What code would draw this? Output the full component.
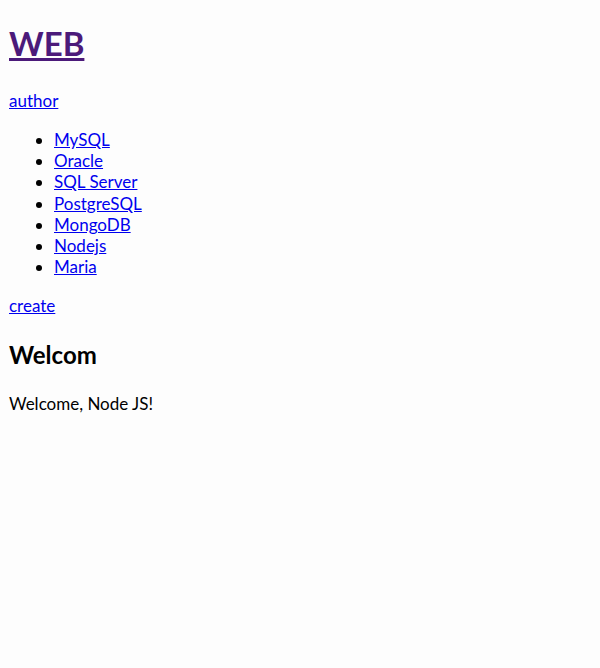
const items = ['MySQL', 'Oracle', 'SQL Server', 'PostgreSQL', 'MongoDB', 'Nodejs', 'Maria']

export default function App() {
  return (
    <div className="min-h-screen bg-[#fdfdfd] px-[9px] text-black font-['Lato',sans-serif] text-[17px] leading-[21px]">
      <h1 className="pt-[23px] text-[33px] leading-[40px] font-bold">
        <a href="#" className="text-[#4b1a7a] underline">WEB</a>
      </h1>
      <p className="mt-[27px]">
        <a href="#" className="text-[#0000ee] underline">author</a>
      </p>
      <ul className="mt-[18px] pl-[45px] list-disc">
        {items.map((name) => (
          <li key={name} className="leading-[21.17px]">
            <a href="#" className="text-[#0000ee] underline">{name}</a>
          </li>
        ))}
      </ul>
      <p className="mt-[18px]">
        <a href="#" className="text-[#0000ee] underline">create</a>
      </p>
      <h2 className="mt-[24px] text-[24px] leading-[30px] font-bold">Welcom</h2>
      <p className="mt-[23px]">Welcome, Node JS!</p>
    </div>
  )
}
